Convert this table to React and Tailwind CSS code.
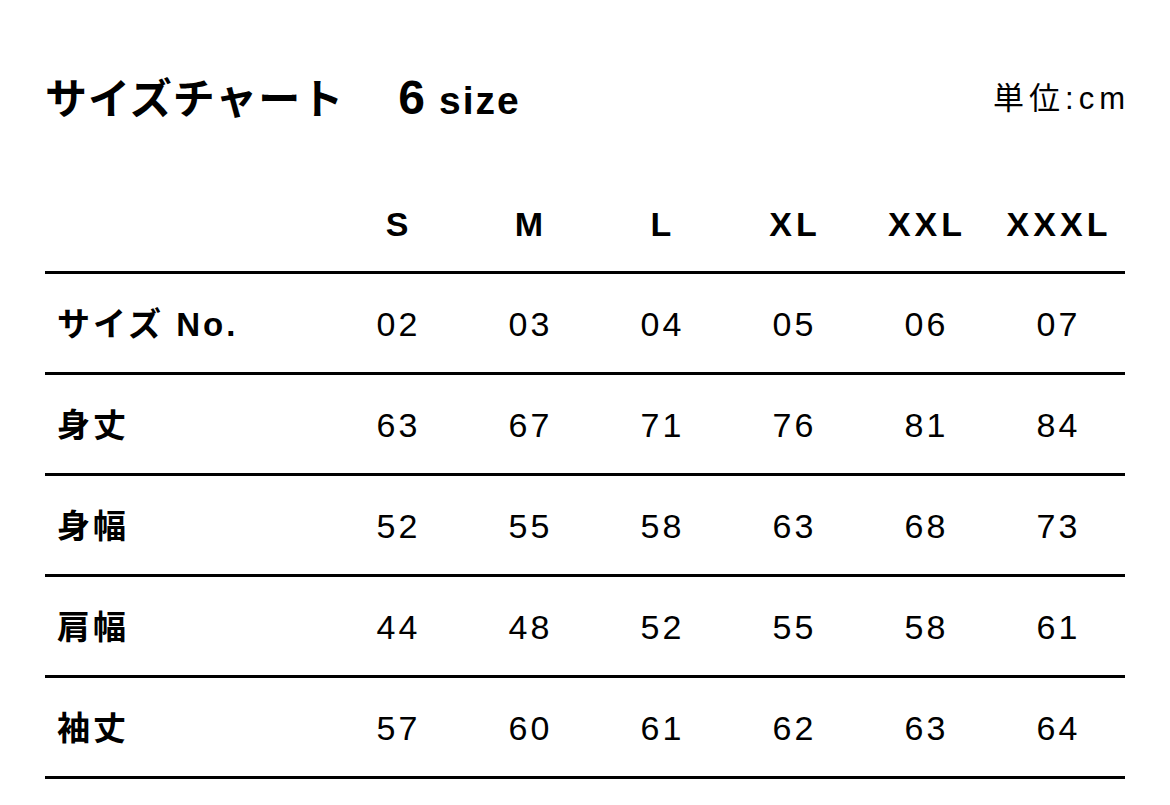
import React from "react";

const sizes = ["S", "M", "L", "XL", "XXL", "XXXL"];

const rows = [
  { label: "サイズ No.", values: ["02", "03", "04", "05", "06", "07"] },
  { label: "身丈", values: ["63", "67", "71", "76", "81", "84"] },
  { label: "身幅", values: ["52", "55", "58", "63", "68", "73"] },
  { label: "肩幅", values: ["44", "48", "52", "55", "58", "61"] },
  { label: "袖丈", values: ["57", "60", "61", "62", "63", "64"] },
];

export default function App() {
  return (
    <div
      className="min-h-[805px] w-[1170px] bg-white px-[45px] pt-[70px] text-black"
      style={{ fontFamily: '"Liberation Sans", "Noto Sans CJK JP", sans-serif' }}
    >
      {/* Title */}
      <div className="flex h-[56px] items-center justify-between">
        <div className="flex items-baseline">
          <h1 className="text-[42px] font-bold leading-none tracking-[1px]">サイズチャート</h1>
          <span className="ml-[54px] text-[48px] font-bold leading-none">6</span>
          <span className="ml-[14px] text-[39px] font-bold leading-none tracking-[2px]">size</span>
        </div>
        <div className="mr-[-5px] text-[31px] leading-none tracking-[5px]">単位:cm</div>
      </div>

      {/* Table */}
      <div className="w-[1080px]">
        <div className="grid h-[148px] grid-cols-[286px_repeat(6,132px)] items-end border-b-[3px] border-black pb-[33px]">
          <div />
          {sizes.map((s) => (
            <div key={s} className="pl-[4px] text-center text-[34px] font-bold leading-[28px] tracking-[4px]">
              {s}
            </div>
          ))}
        </div>

        {rows.map((r) => (
          <div
            key={r.label}
            className="grid h-[101px] grid-cols-[286px_repeat(6,132px)] items-center border-b-[3px] border-black pt-[3px]"
          >
            <div className="pl-[12px] text-[33px] font-bold tracking-[3px]">{r.label}</div>
            {r.values.map((v, i) => (
              <div key={i} className="pl-[3px] text-center text-[34px] tracking-[3px]">
                {v}
              </div>
            ))}
          </div>
        ))}
      </div>
    </div>
  );
}
